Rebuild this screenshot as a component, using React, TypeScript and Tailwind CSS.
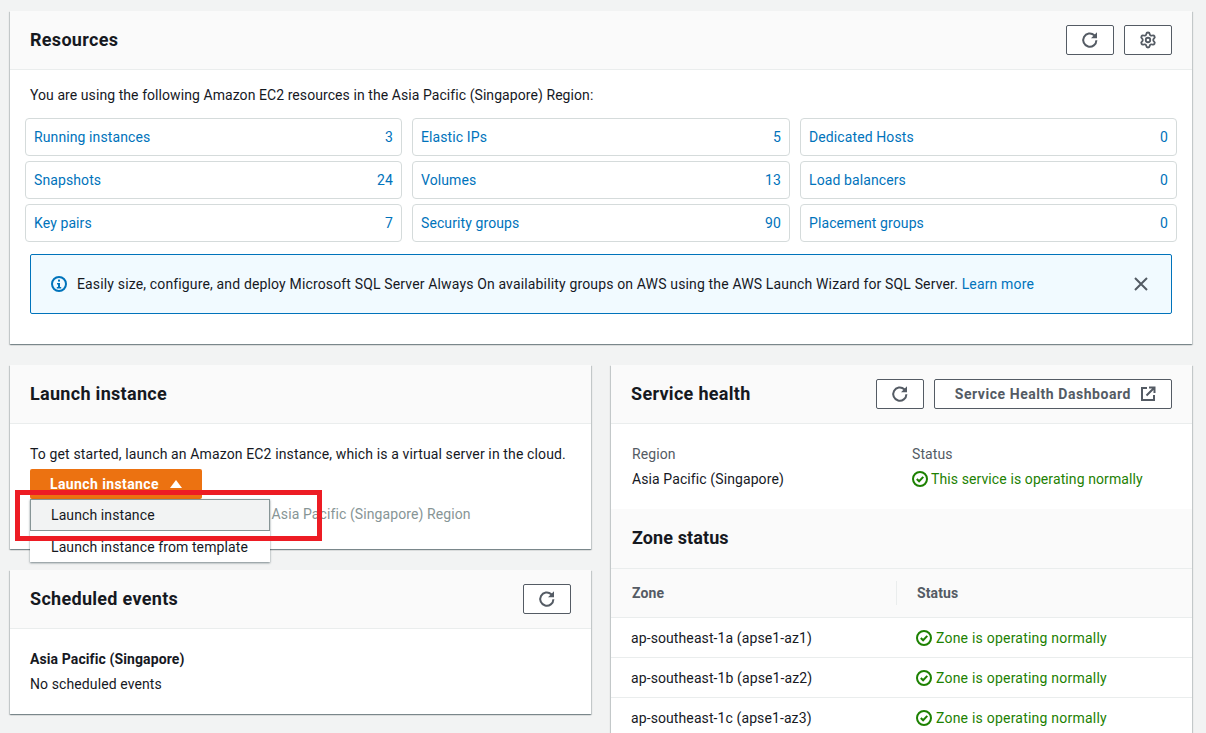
import React from "react";
import { Settings } from "lucide-react";

const Refresh = () => (
  <svg width="18" height="18" viewBox="0 0 18 18" fill="none">
    <path d="M15.4 9.2a6.6 6.6 0 1 1-2.1-4.9l1.6 1.5" stroke="#545b64" strokeWidth="2" />
    <path d="M16 1.2v6h-6z" fill="#545b64" />
  </svg>
);

const Check = () => (
  <svg width="16" height="16" viewBox="0 0 16 16" fill="none" className="shrink-0">
    <circle cx="8" cy="8" r="7" stroke="#1d8102" strokeWidth="2" />
    <path d="M4.8 8l2.3 2.3 4.2-4.4" stroke="#1d8102" strokeWidth="2" />
  </svg>
);

const InfoIcon = () => (
  <svg width="16" height="16" viewBox="0 0 16 16" fill="none" className="shrink-0">
    <circle cx="8" cy="8" r="7" stroke="#0073bb" strokeWidth="2" />
    <rect x="7" y="3.6" width="2" height="2" fill="#0073bb" />
    <path d="M6 7h3v4h1.2v1.4H5.8V11H7V8.4H6z" fill="#0073bb" />
  </svg>
);

const Close = () => (
  <svg width="16" height="16" viewBox="0 0 16 16" fill="none" className="shrink-0">
    <path d="M2 2l12 12M14 2L2 14" stroke="#545b64" strokeWidth="2" />
  </svg>
);

const External = () => (
  <svg width="16" height="16" viewBox="0 0 16 16" fill="none" className="shrink-0">
    <path d="M7 2H2v12h12V9" stroke="#545b64" strokeWidth="2" />
    <path d="M6.5 9.5L14 2M9 1.5h5.5V7" stroke="#545b64" strokeWidth="2" />
  </svg>
);

const IconBtn = ({ children }: { children: React.ReactNode }) => (
  <button className="w-[48px] h-[30px] flex items-center justify-center border border-[#545b64] rounded-[2px] bg-white">
    {children}
  </button>
);

const CardHeader = ({ title, children }: { title: string; children?: React.ReactNode }) => (
  <div className="h-[59px] bg-[#fafafa] border-b border-[#eaeded] pl-[20px] pr-[20px] flex items-center justify-between shrink-0">
    <h2 className="text-[18px] leading-[22px] font-bold text-[#16191f] -mt-[1px] tracking-[0.3px]">{title}</h2>
    <div className="flex gap-[10px]">{children}</div>
  </div>
);

const tiles: [string, number][] = [
  ["Running instances", 3], ["Elastic IPs", 5], ["Dedicated Hosts", 0],
  ["Snapshots", 24], ["Volumes", 13], ["Load balancers", 0],
  ["Key pairs", 7], ["Security groups", 90], ["Placement groups", 0],
];

const zones = [
  "ap-southeast-1a (apse1-az1)",
  "ap-southeast-1b (apse1-az2)",
  "ap-southeast-1c (apse1-az3)",
];

const card = "bg-white shadow-[0_1px_1px_0_rgba(0,28,36,0.3),1px_1px_1px_0_rgba(0,28,36,0.15),-1px_1px_1px_0_rgba(0,28,36,0.15)]";

export default function App() {
  return (
    <div className="h-[733px] w-[1206px] overflow-hidden bg-[#f2f3f3] pt-[11px] pl-[10px] pr-[14px] text-[14px] leading-[20px] tracking-[0.1px] text-[#16191f] font-['Roboto','Noto_Sans',sans-serif] relative">
      <section className={`${card} h-[333px]`}>
        <CardHeader title="Resources">
          <IconBtn><Refresh /></IconBtn>
          <IconBtn><Settings size={18} color="#545b64" strokeWidth={2.4} /></IconBtn>
        </CardHeader>
        <div className="pt-[15px] px-[15px]">
          <p className="pl-[5px] h-[33px] tracking-[0.07px]">You are using the following Amazon EC2 resources in the Asia Pacific (Singapore) Region:</p>
          <div className="grid grid-cols-[377px_378px_377px] gap-x-[10px] gap-y-[5px]">
            {tiles.map(([name, n]) => (
              <div key={name} className="h-[38px] border border-[#d5dbdb] rounded-[4px] px-[8px] flex items-center justify-between text-[#0073bb]">
                <span>{name}</span>
                <span>{n}</span>
              </div>
            ))}
          </div>
          <div className="mt-[12px] mx-[5px] h-[60px] border border-[#0073bb] rounded-[2px] bg-[#f1faff] flex items-center pl-[20px] pr-[22px]">
            <InfoIcon />
            <p className="ml-[10px] flex-1 tracking-[0.15px]">
              Easily size, configure, and deploy Microsoft SQL Server Always On availability groups on AWS using the AWS Launch Wizard for SQL Server. <span className="text-[#0073bb]">Learn more</span>
            </p>
            <Close />
          </div>
        </div>
      </section>

      <div className="mt-[21px] grid grid-cols-[581px_581px] gap-x-[20px] items-start">
        <div className="flex flex-col gap-[21px]">
          <section className={`${card} h-[184px] relative`}>
            <CardHeader title="Launch instance" />
            <div className="pt-[20px] px-[20px]">
              <p className="whitespace-nowrap tracking-[0.13px]">To get started, launch an Amazon EC2 instance, which is a virtual server in the cloud.</p>
              <button className="mt-[5px] h-[30px] w-[172px] bg-[#ec7211] rounded-[2px] text-white font-bold tracking-[0.4px] flex items-center justify-center gap-[11px]">
                Launch instance
                <svg width="12" height="8" viewBox="0 0 12 8"><path d="M6 0L12 8H0z" fill="#fff" /></svg>
              </button>
              <p className="mt-[5px] pl-[218px] text-[#879596] whitespace-nowrap">the Asia Pacific (Singapore) Region</p>
            </div>
            <div className="absolute left-[20px] top-[134px] w-[240px] h-[63px] bg-white shadow-[0_1px_2px_rgba(0,28,36,0.5)] z-10">
              <div className="h-[32px] bg-[#f2f3f3] border border-[#879596] pl-[20px] flex items-center">Launch instance</div>
              <div className="h-[31px] pl-[21px] flex items-center">Launch instance from template</div>
            </div>
          </section>

          <section className={`${card} h-[144px]`}>
            <CardHeader title="Scheduled events">
              <IconBtn><Refresh /></IconBtn>
            </CardHeader>
            <div className="pt-[20px] px-[20px]">
              <p className="font-bold">Asia Pacific (Singapore)</p>
              <p className="mt-[5px]">No scheduled events</p>
            </div>
          </section>
        </div>

        <section className={`${card} h-[400px]`}>
          <CardHeader title="Service health">
            <IconBtn><Refresh /></IconBtn>
            <button className="w-[238px] h-[30px] border border-[#545b64] rounded-[2px] bg-white flex items-center justify-end pr-[15px] gap-[9px] font-bold tracking-[0.55px] text-[#545b64]">
              Service Health Dashboard
              <External />
            </button>
          </CardHeader>
          <div className="h-[85px] px-[21px] pt-[20px] grid grid-cols-[280px_1fr]">
            <div>
              <p className="text-[#545b64] h-[25px]">Region</p>
              <p>Asia Pacific (Singapore)</p>
            </div>
            <div>
              <p className="text-[#545b64] h-[25px]">Status</p>
              <p className="flex items-center gap-[3px] text-[#1d8102]"><Check />This service is operating normally</p>
            </div>
          </div>
          <div className="h-[60px] bg-[#fafafa] border-b border-[#eaeded] pl-[21px] flex items-center">
            <h2 className="text-[18px] leading-[22px] font-bold -mt-[1px]">Zone status</h2>
          </div>
          <div className="h-[49px] bg-[#fafafa] border-b border-[#eaeded] flex items-center font-bold text-[#545b64]">
            <div className="w-[286px] pl-[21px] border-r border-[#eaeded] h-[24px] flex items-center">Zone</div>
            <div className="pl-[20px]">Status</div>
          </div>
          {zones.map((z) => (
            <div key={z} className="h-[40px] border-b border-[#eaeded] flex items-center">
              <div className="w-[305px] pl-[20px]">{z}</div>
              <div className="flex items-center gap-[4px] text-[#1d8102] tracking-[0.22px]"><Check />Zone is operating normally</div>
            </div>
          ))}
        </section>
      </div>

      <div className="absolute left-[15px] top-[490px] w-[307px] h-[51px] border-[5px] border-[#ed1c24] z-20 pointer-events-none" />
    </div>
  );
}
